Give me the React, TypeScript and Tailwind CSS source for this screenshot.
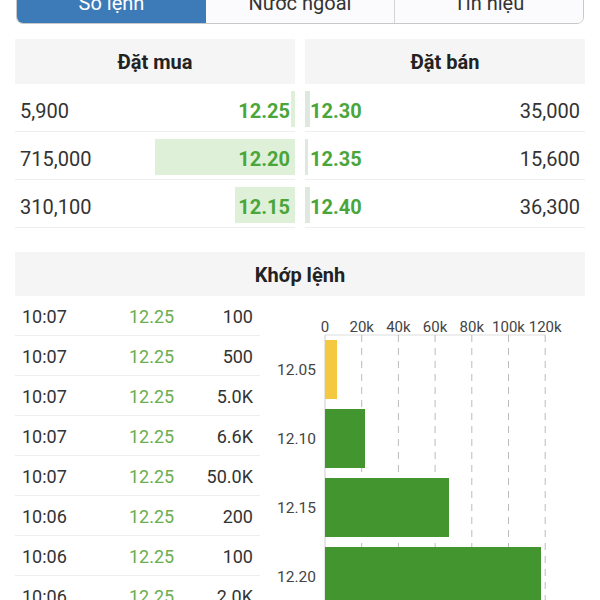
import React from 'react';

const bids = [
  { qty: '5,900', price: '12.25', bar: 4 },
  { qty: '715,000', price: '12.20', bar: 140 },
  { qty: '310,100', price: '12.15', bar: 60 },
];

const asks = [
  { price: '12.30', qty: '35,000', bar: 5 },
  { price: '12.35', qty: '15,600', bar: 3 },
  { price: '12.40', qty: '36,300', bar: 5 },
];

const trades = [
  ['10:07', '12.25', '100'],
  ['10:07', '12.25', '500'],
  ['10:07', '12.25', '5.0K'],
  ['10:07', '12.25', '6.6K'],
  ['10:07', '12.25', '50.0K'],
  ['10:06', '12.25', '200'],
  ['10:06', '12.25', '100'],
  ['10:06', '12.25', '2.0K'],
];

const ticks = ['0', '20k', '40k', '60k', '80k', '100k', '120k'];
const bars = [
  { label: '12.05', y: 44, w: 12, color: '#f5c842' },
  { label: '12.10', y: 113, w: 40, color: '#43962f' },
  { label: '12.15', y: 182, w: 124, color: '#43962f' },
  { label: '12.20', y: 251, w: 216, color: '#43962f' },
];

function Chart() {
  const x0 = 65;
  const step = 36.7;
  return (
    <svg width="324" height="310" className="block">
      {ticks.map((t, i) => (
        <text key={t} x={x0 + i * step} y="36" textAnchor="middle" fontSize="15" fill="#444" fontFamily="Roboto">
          {t}
        </text>
      ))}
      <line x1={x0} y1="39" x2={x0 + 6 * step} y2="39" stroke="#ddd" strokeWidth="1" />
      {ticks.map((t, i) =>
        i === 0 ? (
          <line key={t} x1={x0} y1="39" x2={x0} y2="310" stroke="#ccc" strokeWidth="1" />
        ) : (
          <line key={t} x1={x0 + i * step} y1="39" x2={x0 + i * step} y2="310" stroke="#bbb" strokeWidth="1" strokeDasharray="7 6" />
        )
      )}
      {bars.map((b) => (
        <g key={b.label}>
          <rect x={x0} y={b.y} width={b.w} height="59" fill={b.color} />
          <text x="56" y={b.y + 35} textAnchor="end" fontSize="15.5" fill="#444" fontFamily="Roboto">
            {b.label}
          </text>
        </g>
      ))}
    </svg>
  );
}

export default function App() {
  return (
    <div className="w-[600px] h-[600px] overflow-hidden bg-white text-[#333]" style={{ fontFamily: 'Roboto, "Noto Sans", sans-serif' }}>
      <div className="mx-[16px] -mt-[20px] h-[44px] flex border border-[#c8c8c8] rounded-b-[7px] overflow-hidden text-[20px]">
        <div className="w-[189px] bg-[#3d7ab8] text-white flex items-center justify-center pt-[2px]">Sổ lệnh</div>
        <div className="flex-1 bg-[#fbfbfd] border-r border-[#d4d4d4] flex items-center justify-center pt-[2px]">Nước ngoài</div>
        <div className="flex-1 bg-[#fbfbfd] flex items-center justify-center pt-[2px]">Tín hiệu</div>
      </div>

      <div className="mx-[15px] mt-[15px] grid grid-cols-2 gap-[10px]">
        <div>
          <div className="h-[45px] bg-[#f5f5f5] flex items-center justify-center text-[20px] font-bold text-[#222]">Đặt mua</div>
          {bids.map((r) => (
            <div key={r.price} className="h-[48px] border-b border-[#eeeeee] flex items-center relative pt-[6px]">
              <div className="absolute right-0 top-[7px] bottom-[4px] bg-[#dff0d8]" style={{ width: r.bar }} />
              <span className="relative pl-[5px] text-[20px]">{r.qty}</span>
              <span className="relative ml-auto pr-[5px] text-[20px] font-bold text-[#4aa63a]">{r.price}</span>
            </div>
          ))}
        </div>
        <div>
          <div className="h-[45px] bg-[#f5f5f5] flex items-center justify-center text-[20px] font-bold text-[#222]">Đặt bán</div>
          {asks.map((r) => (
            <div key={r.price} className="h-[48px] border-b border-[#eeeeee] flex items-center relative pt-[6px]">
              <div className="absolute left-0 top-[7px] bottom-[4px] bg-[#dfe8de]" style={{ width: r.bar }} />
              <span className="relative pl-[5px] text-[20px] font-bold text-[#4aa63a]">{r.price}</span>
              <span className="relative ml-auto pr-[5px] text-[20px]">{r.qty}</span>
            </div>
          ))}
        </div>
      </div>

      <div className="mx-[15px] mt-[24px]">
        <div className="h-[44px] bg-[#f5f5f5] flex items-center justify-center text-[20px] font-bold text-[#222] pt-[2px]">Khớp lệnh</div>
        <div className="flex">
          <div className="w-[245px]">
            {trades.map((t, i) => (
              <div key={i} className="h-[40px] border-b border-[#eeeeee] flex items-center text-[18px] pt-[1px]">
                <span className="w-[114px] pl-[7px]">{t[0]}</span>
                <span className="text-[#6aae4f]">{t[1]}</span>
                <span className="ml-auto pr-[7px]">{t[2]}</span>
              </div>
            ))}
          </div>
          <Chart />
        </div>
      </div>
    </div>
  );
}
